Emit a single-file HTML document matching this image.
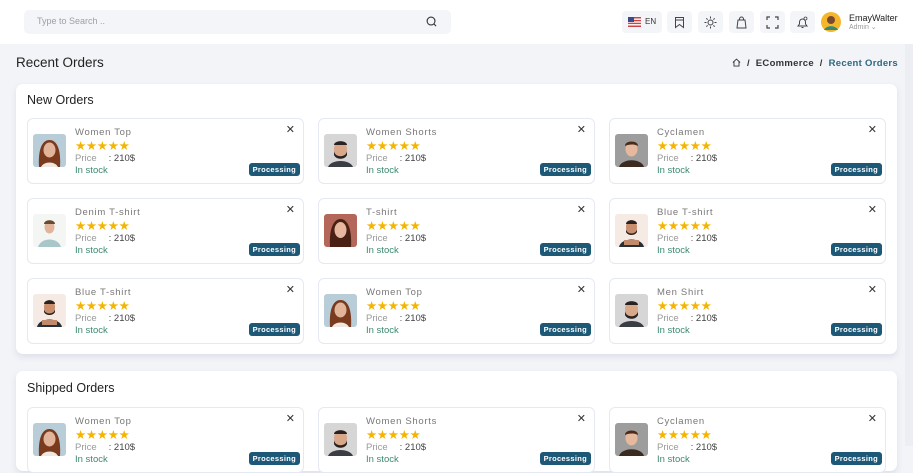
<!DOCTYPE html>
<html><head><meta charset="utf-8"><style>
*{box-sizing:border-box;margin:0;padding:0}
body{width:913px;height:446px;overflow:hidden;background:#f3f4f8;font-family:"Liberation Sans",sans-serif;position:relative}
.hdr{position:absolute;left:0;top:0;width:913px;height:44px;background:#fff}
.search{position:absolute;left:24px;top:10px;width:427px;height:24px;background:#f4f5f9;border-radius:5px;font-size:9px;color:#9aa0aa;padding:6px 13px}
.ib{position:absolute;top:11px;width:25px;height:22px;background:#f4f5f9;border-radius:4px}
.ib svg{position:absolute;left:6px;top:5px}
.title{position:absolute;left:16px;top:55px;font-size:13.5px;color:#222}
.bc{position:absolute;right:15px;top:58px;font-size:9.5px;color:#333;font-weight:bold;letter-spacing:.3px}
.bc span.c{color:#2f6780}
.panel{position:absolute;left:16px;width:881px;background:#fff;border-radius:7px;box-shadow:0 3px 6px rgba(200,205,220,.5)}
.ph{position:absolute;left:11px;font-size:12.5px;color:#222}
.oc{position:absolute;width:277px;height:66px;border:1px solid #e4e9f2;border-radius:6px;background:#fff}
.av{position:absolute;left:5px;top:15px;width:33px;height:33px;border-radius:3px;overflow:hidden}
.nm{position:absolute;left:47px;top:8px;font-size:9.5px;color:#777;letter-spacing:.7px}
.st{position:absolute;left:47px;top:19px;font-size:12.5px;color:#f5b400;letter-spacing:-.3px}
.pr{position:absolute;left:47px;top:34px;font-size:9.5px;color:#999}
.pr b{font-weight:normal;color:#444;margin-left:12px}
.ins{position:absolute;left:47px;top:46px;font-size:9.5px;color:#3c8a6c}
.x{position:absolute;right:8px;top:4px;font-size:11px;color:#333}
.bd{position:absolute;right:3px;top:44px;background:#1d5877;color:#fff;font-size:7.5px;font-weight:bold;padding:2px 4px;border-radius:3px;letter-spacing:.3px}
</style></head><body>
<div class="hdr"></div>
<div class="search">Type to Search ..
<svg style="position:absolute;right:14px;top:6px" width="11" height="11" viewBox="0 0 12 12"><circle cx="5.5" cy="5.5" r="4.3" fill="none" stroke="#333" stroke-width="1.2"/><path d="M8.6 8.6L11 11" stroke="#333" stroke-width="1.2"/></svg></div>
<div class="ib" style="left:622px;width:40px"><svg width="13" height="10" style="left:6px;top:6px"><rect width="13" height="10" fill="#c44"/><rect y="1.5" width="13" height="1.4" fill="#fff"/><rect y="4.3" width="13" height="1.4" fill="#fff"/><rect y="7.1" width="13" height="1.4" fill="#fff"/><rect width="6" height="5" fill="#3a4b8a"/></svg><span style="position:absolute;left:23px;top:6px;font-size:8px;color:#333">EN</span></div>
<div class="ib" style="left:667px"><svg width="13" height="13" viewBox="0 0 13 13"><path d="M2.5 1.5h8v10l-4-3-4 3z M2.5 4h8" fill="none" stroke="#444" stroke-width="1"/></svg></div>
<div class="ib" style="left:698px"><svg width="13" height="13" viewBox="0 0 13 13"><circle cx="6.5" cy="6.5" r="2.5" fill="none" stroke="#444"/><path d="M6.5 0.5v2M6.5 10.5v2M0.5 6.5h2M10.5 6.5h2M2.3 2.3l1.3 1.3M9.4 9.4l1.3 1.3M2.3 10.7l1.3-1.3M9.4 3.6l1.3-1.3" stroke="#444"/></svg></div>
<div class="ib" style="left:729px"><svg width="13" height="13" viewBox="0 0 13 13"><path d="M4.5 4V3a2 2 0 0 1 4 0v1M2 12l1-8h7l1 8z" fill="none" stroke="#444"/></svg></div>
<div class="ib" style="left:760px"><svg width="13" height="13" viewBox="0 0 13 13"><path d="M1 4V1h3M9 1h3v3M12 9v3H9M4 12H1V9" fill="none" stroke="#444" stroke-width="1.2"/></svg></div>
<div class="ib" style="left:790px"><svg width="13" height="13" viewBox="0 0 13 13"><path d="M2 10h9l-1.5-2V6a3 3 0 0 0-6 0v2zM5.5 11.5h2" fill="none" stroke="#444"/><circle cx="9.5" cy="2.5" r="1.5" fill="#fff" stroke="#444" stroke-width=".8"/></svg></div>
<svg style="position:absolute;left:821px;top:12px" width="20" height="20"><circle cx="10" cy="10" r="10" fill="#f5b62a"/><circle cx="10" cy="8" r="4" fill="#7a4a30"/><path d="M3 18c2-5 12-5 14 0" fill="#2f8a7a"/></svg>
<div style="position:absolute;left:849px;top:13px;font-size:9px;color:#222">EmayWalter</div>
<div style="position:absolute;left:849px;top:23px;font-size:7px;color:#999">Admin ⌄</div>
<div class="title">Recent Orders</div>
<div class="bc"><svg width="9" height="9" viewBox="0 0 10 10" style="vertical-align:-1px"><path d="M1 5L5 1.2 9 5M2.2 4v5h5.6V4" fill="none" stroke="#333"/></svg> &nbsp;/ &nbsp;ECommerce &nbsp;/ &nbsp;<span class="c">Recent Orders</span></div>

<div class="panel" style="top:84px;height:270px"><div class="ph" style="top:9px">New Orders</div></div>
<div class="panel" style="top:371px;height:100px"><div class="ph" style="top:10px">Shipped Orders</div></div>

<div id="cards"></div>
<script>
const W='<svg width="33" height="33"><rect width="33" height="33" fill="#b8cdd8"/><path d="M6 33C5 18 8 6 16.5 6S28 18 27 33z" fill="#7a3a1e"/><ellipse cx="16.5" cy="16" rx="6" ry="7.5" fill="#e2b49a"/><path d="M8 33c3-6 14-6 17 0" fill="#efe7e0"/></svg>';
const M='<svg width="33" height="33"><rect width="33" height="33" fill="#d6d6d6"/><path d="M4 33c3-8 22-8 25 0" fill="#3a3d44"/><ellipse cx="16.5" cy="15" rx="6.5" ry="8" fill="#d8a888"/><path d="M10 17c1 7 12 7 13 0v4c-2 5-11 5-13 0z" fill="#2a2220"/><path d="M10 11c0-5 13-5 13 0" fill="#2a2220"/></svg>';
const Y='<svg width="33" height="33"><rect width="33" height="33" fill="#9d9d9d"/><path d="M4 33c3-9 22-9 25 0" fill="#3a2a20"/><ellipse cx="16.5" cy="15" rx="6" ry="7.5" fill="#e6b99e"/><path d="M10 12c0-6 13-6 13 0c-3-2-9-2-13 0z" fill="#4a2a18"/></svg>';
const D='<svg width="33" height="33"><rect width="33" height="33" fill="#f4f6f3"/><path d="M5 33c3-10 20-10 23 0" fill="#a9c7c9"/><ellipse cx="16.5" cy="13" rx="5" ry="6.5" fill="#e2b49a"/><path d="M11 10c0-5 11-5 11 0" fill="#6a4a30"/></svg>';
const B='<svg width="33" height="33"><rect width="33" height="33" fill="#f5ebe4"/><path d="M4 33c2-10 23-10 25 0" fill="#26303a"/><rect x="9" y="26" width="15" height="5" fill="#c08a6c"/><ellipse cx="16.5" cy="13" rx="5.5" ry="7" fill="#c98e6c"/><path d="M11 15c1 6 10 6 11 0v3c-2 4-9 4-11 0z" fill="#2a2220"/><path d="M11 10c0-5 11-5 11 0" fill="#2a2220"/></svg>';
const F='<svg width="33" height="33"><rect width="33" height="33" fill="#b5665a"/><path d="M6 33C5 16 9 5 16.5 5S28 16 27 33z" fill="#4a2015"/><ellipse cx="16.5" cy="16" rx="6" ry="8" fill="#e6b6a0"/></svg>';
const rows=[[[W,'Women Top'],[M,'Women Shorts'],[Y,'Cyclamen']],[[D,'Denim T-shirt'],[F,'T-shirt'],[B,'Blue T-shirt']],[[B,'Blue T-shirt'],[W,'Women Top'],[M,'Men Shirt']]];
const xs=[27,318,609];const ys=[118,198,278];let h='';
function card(x,y,a,n){return `<div class="oc" style="left:${x}px;top:${y}px"><div class="av">${a}</div><div class="nm">${n}</div><div class="st">★★★★★</div><div class="pr">Price<b>: 210$</b></div><div class="ins">In stock</div><div class="x">✕</div><div class="bd">Processing</div></div>`}
rows.forEach((r,i)=>r.forEach((c,j)=>h+=card(xs[j],ys[i],c[0],c[1])));
rows[0].forEach((c,j)=>h+=card(xs[j],407,c[0],c[1]));
document.getElementById('cards').innerHTML=h;
</script>
<div style="position:absolute;left:905px;top:44px;width:8px;height:402px;background:#eceef4"></div>
</body></html>
